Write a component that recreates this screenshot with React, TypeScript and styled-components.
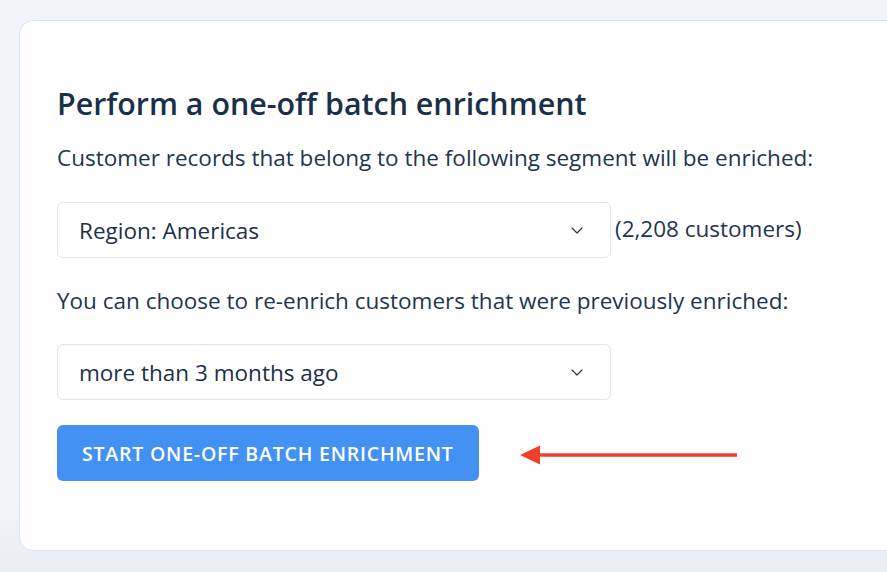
import React from 'react';
import styled, { createGlobalStyle } from 'styled-components';

const GlobalStyle = createGlobalStyle`
  html, body {
    margin: 0;
    padding: 0;
    background: #f1f4f9;
  }
  body {
    font-family: 'Open Sans', 'Noto Sans', sans-serif;
    color: #1b3049;
  }
`;

const Page = styled.div`
  width: 887px;
  height: 572px;
  overflow: hidden;
  padding: 20px 0 0 19px;
  box-sizing: border-box;
  background: linear-gradient(#f1f4f9, #f1f4f9 88%, #e9edf3);
`;

const Card = styled.section`
  width: 900px;
  height: 531px;
  box-sizing: border-box;
  background: #fff;
  border: 1px solid #dde3ec;
  border-radius: 14px;
  padding: 65px 0 0 37px;
`;

const Title = styled.h1`
  margin: 0;
  font-size: 30.4px;
  line-height: 36px;
  font-weight: 600;
  color: #1a2f48;
`;

const Text = styled.p<{ $top: number }>`
  margin: ${(p) => p.$top}px 0 0;
  font-size: 22.5px;
  line-height: 28px;
  color: #1f3550;
`;

const Row = styled.div<{ $top: number }>`
  display: flex;
  align-items: center;
  margin-top: ${(p) => p.$top}px;
`;

const Select = styled.div`
  width: 554px;
  height: 56px;
  box-sizing: border-box;
  border: 1.5px solid #dfe4eb;
  border-radius: 6px;
  display: flex;
  align-items: center;
  justify-content: space-between;
  padding: 0 27px 0 21px;
  font-size: 22.5px;
  color: #1b3049;
`;

const Count = styled.span`
  font-size: 22.5px;
  color: #1f3550;
  margin: -3px 0 0 4px;
`;

const Button = styled.button`
  height: 56px;
  padding: 0 25px;
  border: none;
  border-radius: 6px;
  background: #4391f2;
  color: #fff;
  font-family: inherit;
  font-size: 19.5px;
  font-weight: 600;
  letter-spacing: 0.8px;
  text-transform: uppercase;
`;

const ArrowWrap = styled.span`
  display: flex;
  margin: 3px 0 0 41px;
`;

const Chevron = () => (
  <svg width="12" height="7" viewBox="0 0 12 7" fill="none">
    <path d="M1 1l5 5 5-5" stroke="#2a3b52" strokeWidth="1.2" strokeLinecap="round" strokeLinejoin="round" />
  </svg>
);

const Arrow = () => (
  <svg width="217" height="20" viewBox="0 0 217 20">
    <rect x="16" y="8.25" width="201" height="3.5" fill="#ee3f2a" />
    <polygon points="0,10 20,0.5 20,19.5" fill="#ee3f2a" />
  </svg>
);

const App = () => (
  <>
    <GlobalStyle />
    <Page>
      <Card>
        <Title>Perform a one-off batch enrichment</Title>
        <Text $top={22}>Customer records that belong to the following segment will be enriched:</Text>
        <Row $top={30}>
          <Select>
            <span>Region: Americas</span>
            <Chevron />
          </Select>
          <Count>(2,208 customers)</Count>
        </Row>
        <Text $top={29}>You can choose to re-enrich customers that were previously enriched:</Text>
        <Row $top={29}>
          <Select>
            <span>more than 3 months ago</span>
            <Chevron />
          </Select>
        </Row>
        <Row $top={25}>
          <Button>Start one-off batch enrichment</Button>
          <ArrowWrap><Arrow /></ArrowWrap>
        </Row>
      </Card>
    </Page>
  </>
);

export default App;
